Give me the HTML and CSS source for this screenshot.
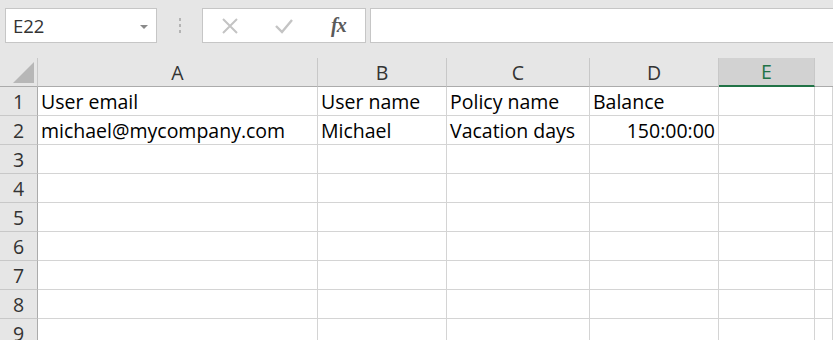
FILE: index.html
```html
<!DOCTYPE html>
<html lang="en">
<head>
    <meta charset="UTF-8">
    <title>Sheet1</title>
    <link rel="stylesheet" href="styles.css">
</head>
<body>
<div class="formula-bar">
    <div class="name-box">
        <span>E22</span>
        <span class="caret"></span>
    </div>
    <div class="grip">
        <i></i><i></i><i></i>
    </div>
    <div class="fx-group">
        <!-- cancel -->
        <svg width="18" height="18" viewBox="0 0 18 18">
            <path d="M2 2 L16 16 M16 2 L2 16" stroke="#c4c4c4" stroke-width="2" fill="none"/>
        </svg>
        <!-- enter -->
        <svg class="enter" width="20" height="18" viewBox="0 0 20 18">
            <path d="M2 9 L8 15 L18 3" stroke="#c4c4c4" stroke-width="2.4" fill="none"/>
        </svg>
        <span class="fx">fx</span>
    </div>
    <div class="formula-input"></div>
</div>

<div class="sheet">
    <div class="corner"><span class="tri"></span></div>
    <div class="col-head">A</div>
    <div class="col-head">B</div>
    <div class="col-head">C</div>
    <div class="col-head">D</div>
    <div class="col-head selected">E</div>
    <div class="col-head last"></div>

    <div class="row-head">1</div>
    <div class="cell">User email</div>
    <div class="cell">User name</div>
    <div class="cell">Policy name</div>
    <div class="cell">Balance</div>
    <div class="cell"></div>
    <div class="cell"></div>

    <div class="row-head">2</div>
    <div class="cell">michael@mycompany.com</div>
    <div class="cell">Michael</div>
    <div class="cell">Vacation days</div>
    <div class="cell num">150:00:00</div>
    <div class="cell"></div>
    <div class="cell"></div>

    <div class="row-head">3</div>
    <div class="cell"></div><div class="cell"></div><div class="cell"></div><div class="cell"></div><div class="cell"></div><div class="cell"></div>
    <div class="row-head">4</div>
    <div class="cell"></div><div class="cell"></div><div class="cell"></div><div class="cell"></div><div class="cell"></div><div class="cell"></div>
    <div class="row-head">5</div>
    <div class="cell"></div><div class="cell"></div><div class="cell"></div><div class="cell"></div><div class="cell"></div><div class="cell"></div>
    <div class="row-head">6</div>
    <div class="cell"></div><div class="cell"></div><div class="cell"></div><div class="cell"></div><div class="cell"></div><div class="cell"></div>
    <div class="row-head">7</div>
    <div class="cell"></div><div class="cell"></div><div class="cell"></div><div class="cell"></div><div class="cell"></div><div class="cell"></div>
    <div class="row-head">8</div>
    <div class="cell"></div><div class="cell"></div><div class="cell"></div><div class="cell"></div><div class="cell"></div><div class="cell"></div>
    <div class="row-head">9</div>
    <div class="cell"></div><div class="cell"></div><div class="cell"></div><div class="cell"></div><div class="cell"></div><div class="cell"></div>
</div>
</body>
</html>
```

FILE: styles.css
```css
body {
    margin: 0;
    background-color: #e6e6e6;
    font-family: 'Open Sans', sans-serif;
    overflow: hidden;
}

.formula-bar {
    display: flex;
    align-items: center;
    height: 35px;
    padding: 8px 0 15px 5px;
}

.name-box {
    box-sizing: border-box;
    width: 152px;
    height: 35px;
    background-color: #fff;
    border: 1px solid #c6c6c6;
    display: flex;
    align-items: center;
    justify-content: space-between;
    padding: 0 8px 0 7px;
    font-size: 18.5px;
    color: #333;
}

.caret {
    width: 0;
    height: 0;
    border-left: 4px solid transparent;
    border-right: 4px solid transparent;
    border-top: 4px solid #8a8a8a;
    margin-top: 2px;
}

.grip {
    width: 45px;
    display: flex;
    flex-direction: column;
    align-items: center;
    gap: 3px;
}

.grip i {
    width: 2px;
    height: 3px;
    background-color: #b4b4b4;
}

.fx-group {
    box-sizing: border-box;
    width: 164px;
    height: 35px;
    background-color: #fff;
    border: 1px solid #c6c6c6;
    display: flex;
    align-items: center;
    padding-left: 18px;
}

.enter {
    margin-left: 35px;
}

.fx {
    margin-left: 37px;
    font-family: 'Liberation Serif', serif;
    font-style: italic;
    font-weight: bold;
    font-size: 20px;
    color: #5a5a5a;
    letter-spacing: -1px;
}

.formula-input {
    flex: 1;
    height: 35px;
    box-sizing: border-box;
    margin-left: 4px;
    background-color: #fff;
    border: 1px solid #c6c6c6;
    border-right: none;
}

.sheet {
    display: grid;
    grid-template-columns: 38px 280px 129px 143px 129px 96px 1fr;
    grid-auto-rows: 29px;
    background-color: #fff;
    font-size: 19.5px;
    color: #000;
}

.corner, .col-head, .row-head {
    background-color: #e6e6e6;
    border-right: 1px solid #c8c8c8;
    border-bottom: 1px solid #ababab;
}

.corner {
    position: relative;
}

.tri {
    position: absolute;
    right: 3px;
    bottom: 3px;
    width: 0;
    height: 0;
    border-left: 21px solid transparent;
    border-bottom: 21px solid #b7b7b7;
}

.col-head {
    display: flex;
    align-items: center;
    justify-content: center;
    color: #333;
}

.col-head.last {
    border-right: none;
}

.col-head.selected {
    background-color: #d2d2d2;
    color: #217346;
    border-bottom: 2px solid #217346;
}

.row-head {
    display: flex;
    align-items: center;
    justify-content: center;
    color: #333;
    border-bottom-color: #c8c8c8;
    border-right-color: #ababab;
}

.cell {
    border-right: 1px solid #d4d4d4;
    border-bottom: 1px solid #d4d4d4;
    padding: 0 3px;
    display: flex;
    align-items: center;
    white-space: nowrap;
}

.cell.num {
    justify-content: flex-end;
}
```
